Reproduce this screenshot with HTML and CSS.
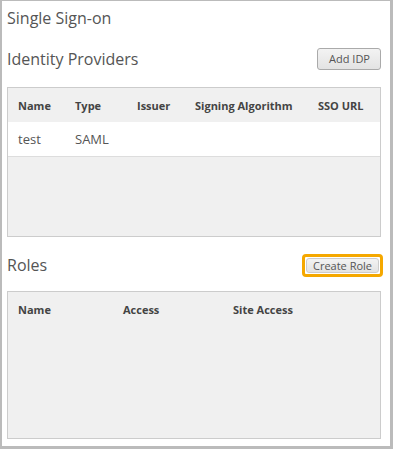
FILE: index.html
```html
<!DOCTYPE html>
<html lang="en">
<head>
  <meta charset="UTF-8" />
  <title>Single Sign-on</title>
  <link rel="stylesheet" href="styles.css">
</head>
<body>

<div class="panel">
  <h1>Single Sign-on</h1>

  <div class="section-head">
    <h2>Identity Providers</h2>
    <button class="btn">Add IDP</button>
  </div>
  <div class="grid idp">
    <div class="row head">
      <span class="c-name">Name</span>
      <span class="c-type">Type</span>
      <span class="c-issuer">Issuer</span>
      <span class="c-alg">Signing Algorithm</span>
      <span class="c-url">SSO URL</span>
    </div>
    <div class="row item">
      <span class="c-name">test</span>
      <span class="c-type">SAML</span>
      <span class="c-issuer"></span>
      <span class="c-alg"></span>
      <span class="c-url"></span>
    </div>
  </div>

  <div class="section-head roles-head">
    <h2>Roles</h2>
    <span class="focus-ring"><button class="btn">Create Role</button></span>
  </div>
  <div class="grid roles">
    <div class="row head">
      <span class="r-name">Name</span>
      <span class="r-access">Access</span>
      <span class="r-site">Site Access</span>
    </div>
  </div>
</div>

</body>
</html>
```

FILE: styles.css
```css
* { margin: 0; padding: 0; box-sizing: border-box; }
body {
  font-family: 'Open Sans', sans-serif;
  color: #555;
  background: #fff;
}
.panel {
  width: 393px; height: 449px;
  border: solid #bbb; border-width: 1px 3px 3px 2px;
  padding: 6px 9px 0 5px;
}
h1 { font-size: 16px; font-weight: 400; line-height: 22px; color: #555; }
.section-head {
  display: flex; justify-content: space-between; align-items: center;
  margin-top: 13px; height: 34px;
}
h2 { font-size: 16px; font-weight: 400; color: #555; }
.btn {
  font-family: inherit; font-size: 11px; color: #555;
  background: linear-gradient(#f3f3f3, #e3e3e3);
  border: 1px solid #aaa; border-radius: 3px;
  padding: 3px 10px 3px 11px; line-height: 14px;
  height: 22px;
}
.grid {
  border: 1px solid #ccc; background: #f0f0f0;
  margin-top: 11px;
}
.idp { height: 150px; }
.roles { height: 148px; margin-top: 8px; }
.row { display: flex; align-items: center; }
.row span { flex: none; }
.head { height: 34px; font-size: 11px; font-weight: 700; color: #444; padding-left: 10px; }
.item {
  height: 35px; background: #fff; border-bottom: 1px solid #ddd;
  font-size: 13px; color: #555; padding-left: 10px;
}
.c-name { width: 57px; }
.c-type { width: 62px; }
.c-issuer { width: 58px; }
.c-alg { width: 123px; }
.r-name { width: 105px; }
.r-access { width: 110px; }
.roles-head { margin-top: 10px; height: 36px; }
.focus-ring {
  display: flex; border: 3px solid #f5a800; border-radius: 4px;
  padding: 1px; margin-right: -2px;
}
.focus-ring .btn {
  border: 1px solid #ccc; padding: 0 6px; height: 15px;
  line-height: 13px; font-size: 11px;
}
```
